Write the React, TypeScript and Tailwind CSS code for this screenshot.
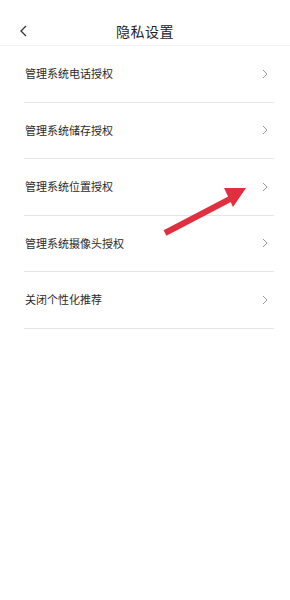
import React from "react";

const items = [
  "管理系统电话授权",
  "管理系统储存授权",
  "管理系统位置授权",
  "管理系统摄像头授权",
  "关闭个性化推荐",
];

export default function App() {
  return (
    <div
      className="relative w-[290px] h-[600px] bg-white overflow-hidden"
      style={{ fontFamily: '"Noto Sans CJK SC", "Noto Sans", sans-serif' }}
    >
      <div className="pt-[17px] border-b border-[#f0f0f0]">
        <div className="relative h-[28px] flex items-center justify-center">
          <svg
            className="absolute left-[19px] top-[8px]"
            width="9"
            height="12"
            viewBox="0 0 9 12"
            fill="none"
          >
            <path d="M7 1 L2 6 L7 11" stroke="#333" strokeWidth="1.3" />
          </svg>
          <span className="text-[14px] text-[#222] tracking-[0.5px] leading-none">
            隐私设置
          </span>
        </div>
      </div>
      <div className="ml-[24px] mr-[16px]">
        {items.map((t) => (
          <div
            key={t}
            className="h-[56.5px] border-b border-[#e6e6e6] flex items-center justify-between"
          >
            <span className="text-[11px] text-[#2a2a2a] leading-none pl-[1px]">{t}</span>
            <svg
              className="mr-[6px]"
              width="6"
              height="10"
              viewBox="0 0 6 10"
              fill="none"
            >
              <path d="M1 1 L5 5 L1 9" stroke="#999" strokeWidth="1" />
            </svg>
          </div>
        ))}
      </div>
      <svg
        className="absolute left-0 top-0 pointer-events-none"
        width="290"
        height="600"
        viewBox="0 0 290 600"
      >
        <line
          x1="165"
          y1="233"
          x2="232"
          y2="198"
          stroke="#e0303f"
          strokeWidth="6"
        />
        <polygon points="246,188 224,188 233,207" fill="#e0303f" />
      </svg>
    </div>
  );
}
